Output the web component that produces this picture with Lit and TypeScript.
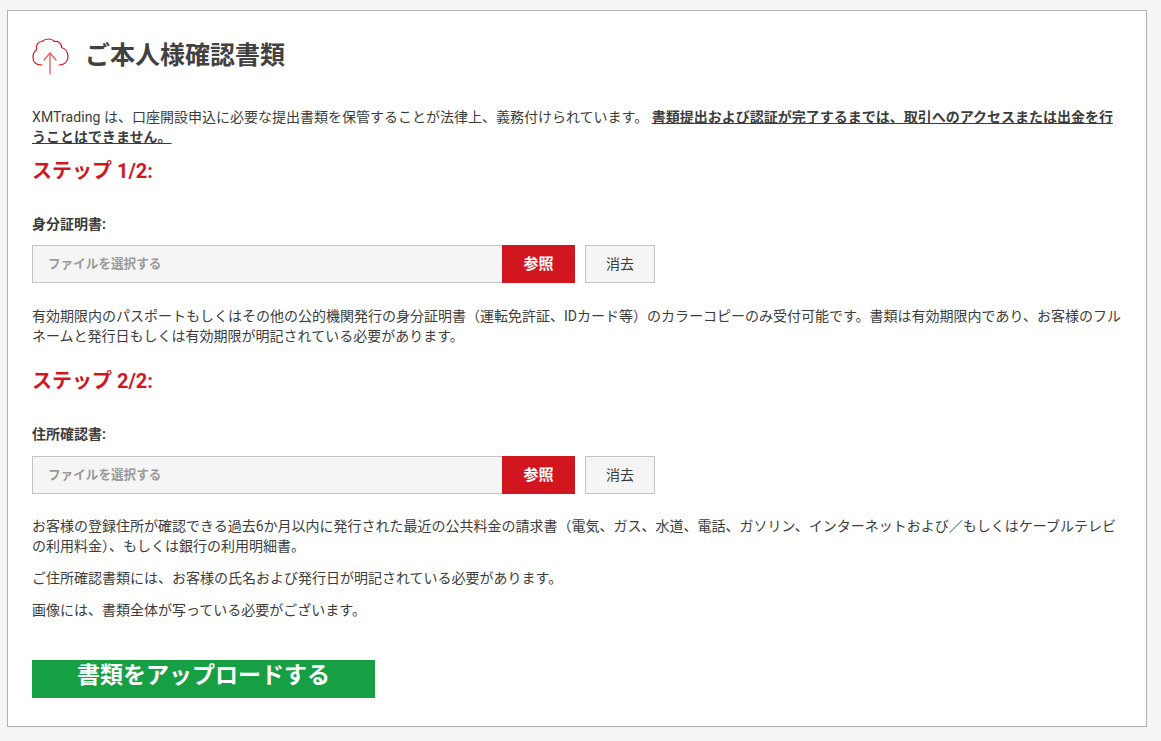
import { LitElement, html, css } from "lit";
import { customElement } from "lit/decorators.js";

@customElement("app-root")
export class AppRoot extends LitElement {
  static styles = css`
    :host { display: block; background: #f5f5f5; height: 741px; box-sizing: border-box; padding: 10px 14px 0 7px;
      font-family: Roboto, "Noto Sans CJK JP", sans-serif; color: #3c3c3c; font-size: 14px; line-height: 20px; }
    .card { background: #fff; border: 1px solid #b3b3b3; height: 717px; box-sizing: border-box; padding: 25px 24px 0; }
    .head { display: flex; align-items: center; height: 40px; gap: 15px; }
    .head svg { width: 38px; height: 38px; flex: none; }
    h1 { margin: 0; font-size: 25px; line-height: 46px; font-weight: 700; color: #414141; }
    p { margin: 0; }
    .latin { letter-spacing: 0.1px; }
    .intro { margin-top: 31px; }
    .intro b { text-decoration: underline; font-weight: 700; }
    h2 { margin: 0; color: #d2161f; font-size: 20px; line-height: 30px; font-weight: 700; }
    .s1 { margin-top: 9px; }
    .s2 { margin-top: 20px; }
    label { display: block; font-weight: 700; margin-top: 28px; }
    .file { display: flex; margin-top: 11px; height: 38px; }
    .s2 + label + .file { margin-top: 12px; }
    .input { box-sizing: border-box; width: 470px; border: 1px solid #c4c4c4; border-right: 0; background: #f5f5f5;
      color: #9a9a9a; font-weight: 700; font-size: 12.600px; padding-left: 15px; line-height: 36px; }
    .browse { width: 73px; background: #d2161f; color: #fff; font-weight: 700; font-size: 15px; text-align: center; line-height: 38px; }
    .clear { box-sizing: border-box; width: 70px; margin-left: 10px; border: 1px solid #c4c4c4; background: #f5f5f5; text-align: center; line-height: 36px; }
    .desc { margin-top: 22px; }
    .s1 + label + .file + .desc { margin-top: 23px; }
    .note { margin-top: 12px; }
    .upload { width: 343px; height: 38px; margin-top: 40px; background: #169f43; color: #fff; font-size: 23px; font-weight: 700;
      text-align: center; line-height: 31px; }
  `;

  private field(name: string) {
    return html`<label>${name}:</label>
      <div class="file">
        <div class="input">ファイルを選択する</div>
        <div class="browse">参照</div>
        <div class="clear">消去</div>
      </div>`;
  }

  render() {
    return html`<div class="card">
      <div class="head">
        <svg viewBox="0 0 38 38" fill="none" stroke-linecap="round" stroke-linejoin="round">
          <path d="M10 28 C4 28 1 25 1 20.500 C1 17 2.500 14 4.500 13 C3.500 8 6 4.500 10 4.500 C12 2.500 15 2 17 2 C19 2 21 3 22.500 4.500 C26 3.500 30 6.500 29.500 10.500 C33 11.500 36 15 36 19.500 C36 24.500 32.500 28 27 28" stroke="#d2161f" stroke-width="1.200"/>
          <path d="M18 37 V16 M12 23 L18 16 L24 23" stroke="#e8646c" stroke-width="1.400"/>
        </svg>
        <h1>ご本人様確認書類</h1>
      </div>
      <p class="intro"><span class="latin">XMTrading</span> は、口座開設申込に必要な提出書類を保管することが法律上、義務付けられています。 <b>書類提出および認証が完了するまでは、取引へのアクセスまたは出金を行うことはできません。 </b></p>
      <h2 class="s1">ステップ 1/2:</h2>
      ${this.field("身分証明書")}
      <p class="desc">有効期限内のパスポートもしくはその他の公的機関発行の身分証明書（運転免許証、IDカード等）のカラーコピーのみ受付可能です。書類は有効期限内であり、お客様のフルネームと発行日もしくは有効期限が明記されている必要があります。</p>
      <h2 class="s2">ステップ 2/2:</h2>
      ${this.field("住所確認書")}
      <p class="desc">お客様の登録住所が確認できる過去6か月以内に発行された最近の公共料金の請求書（電気、ガス、水道、電話、ガソリン、インターネットおよび／もしくはケーブルテレビの利用料金）、もしくは銀行の利用明細書。</p>
      <p class="note">ご住所確認書類には、お客様の氏名および発行日が明記されている必要があります。</p>
      <p class="note">画像には、書類全体が写っている必要がございます。</p>
      <div class="upload">書類をアップロードする</div>
    </div>`;
  }
}
